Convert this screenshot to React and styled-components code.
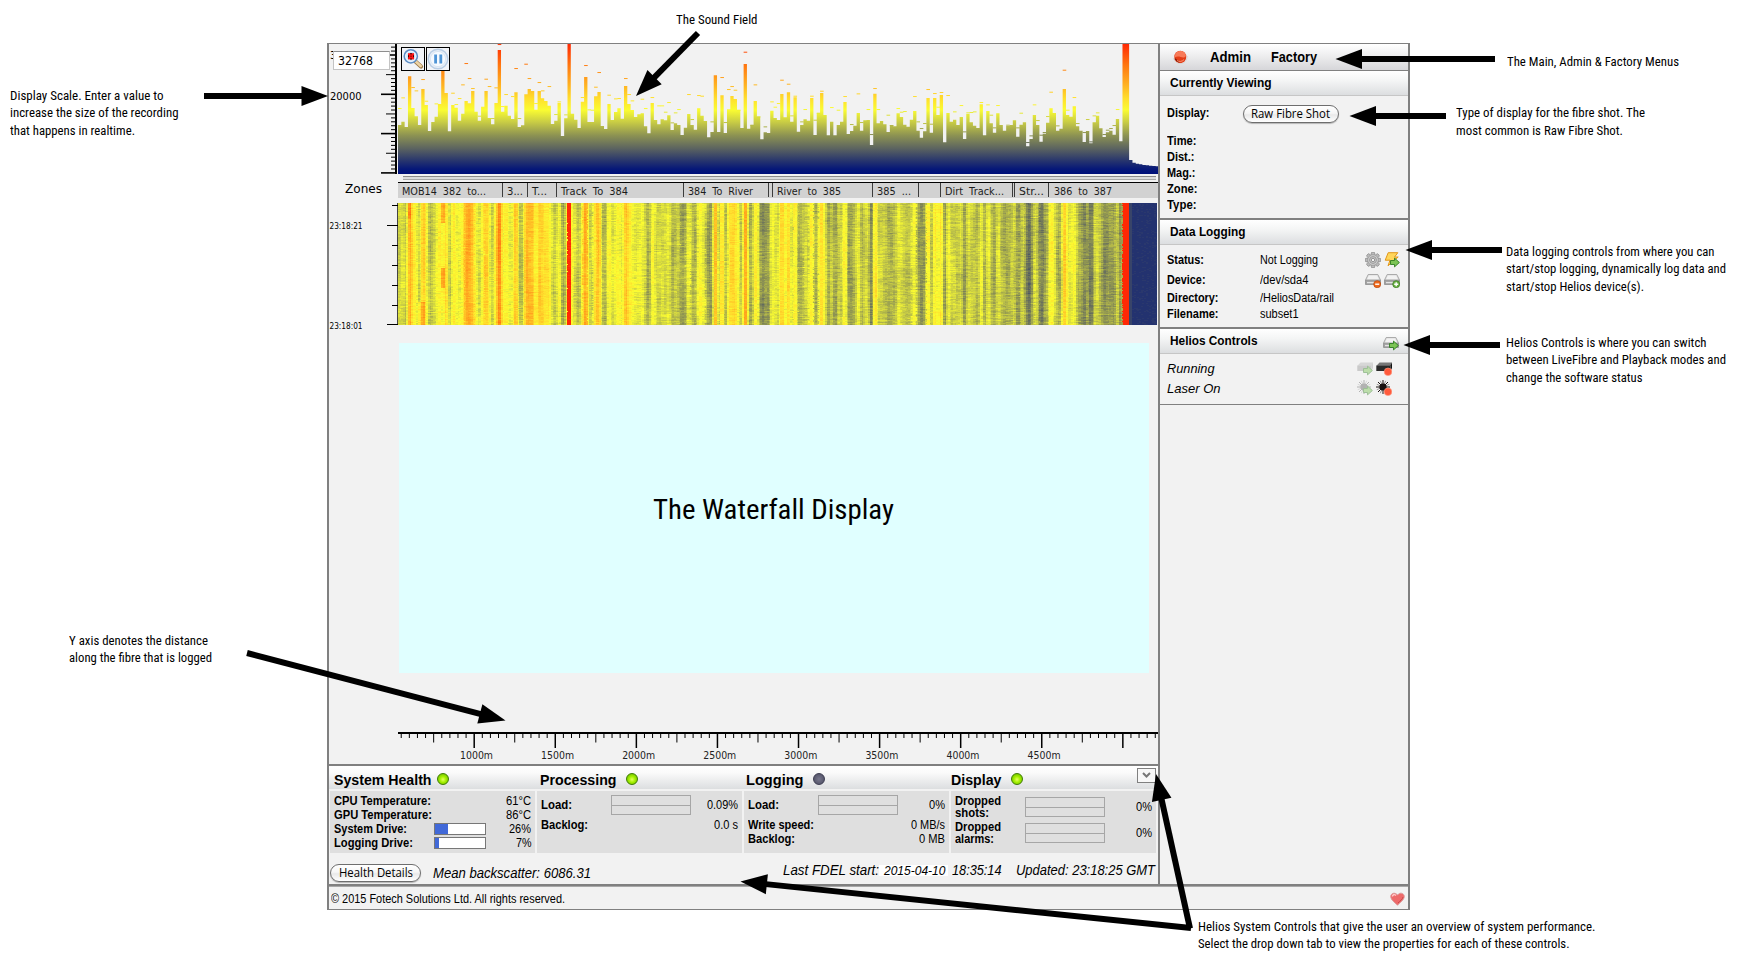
import React, { useLayoutEffect, useMemo, useRef, useState } from "react";
import styled, { createGlobalStyle, css } from "styled-components";

const Global = createGlobalStyle`
  * { box-sizing: border-box; }
  body { margin: 0; background: #fff; color: #000; font-family: "Liberation Sans", Arial, sans-serif; }
`;

const GREY = "#808080";
const PLOTTER = `"DejaVu Sans", sans-serif`;
const LUCIDA = `"Open Sans", "Noto Sans", sans-serif`;
const CONDENSED = `Roboto, "Liberation Sans", sans-serif`;

/* ---------- text set to a fixed measure ---------- */

const Measure = styled.span`
  display: inline-block;
  flex: none;
  width: ${(p) => p.$w}px;
  white-space: nowrap;
`;
const Glyphs = styled.span`
  display: inline-block;
  transform-origin: 0 50%;
`;

function Fit({ w, children }) {
  const ref = useRef(null);
  const [scale, setScale] = useState(1);
  useLayoutEffect(() => {
    const el = ref.current;
    el.style.transform = "none";
    const s = w / el.getBoundingClientRect().width;
    el.style.transform = `scaleX(${s})`;
    setScale(s);
  }, [w, children]);
  return (
    <Measure $w={w}>
      <Glyphs ref={ref} style={{ transform: `scaleX(${scale})` }}>{children}</Glyphs>
    </Measure>
  );
}

/* ---------- signal data ---------- */

const LEVELS = [
  270, 260, 276, 124, 219, 244, 270, 162, 210, 288, 261, 245, 207, 96, 174, 289, 210, 218, 257, 236,
  198, 205, 168, 230, 257, 215, 168, 249, 268, 204, 45, 230, 212, 242, 252, 172, 276, 271, 178, 162,
  168, 224, 168, 190, 198, 212, 267, 257, 204, 303, 250, 20, 236, 254, 279, 200, 126, 261, 261, 184,
  171, 273, 282, 207, 255, 231, 220, 251, 153, 207, 225, 246, 238, 235, 274, 295, 204, 255, 268, 253,
  256, 241, 285, 265, 270, 300, 278, 237, 270, 284, 220, 242, 258, 307, 291, 121, 291, 181, 294, 223,
  183, 192, 225, 279, 87, 281, 270, 198, 245, 313, 292, 294, 227, 249, 255, 177, 247, 172, 260, 187,
  290, 270, 253, 257, 189, 300, 234, 174, 240, 301, 260, 301, 270, 260, 201, 297, 288, 272, 234, 287,
  256, 255, 330, 176, 265, 258, 268, 291, 270, 274, 235, 246, 269, 275, 254, 228, 287, 308, 289, 189,
  293, 189, 240, 180, 322, 234, 260, 254, 270, 246, 312, 237, 262, 272, 279, 208, 301, 228, 265, 293,
  235, 270, 287, 273, 270, 256, 305, 269, 262, 334, 312, 240, 270, 320, 296, 263, 220, 234, 287, 281,
  162, 240, 245, 214, 274, 287, 321, 288, 325, 262, 242, 280, 306, 292, 287, 299, 252, 319, 20, 20,
  375, 383, 386, 388, 390, 391, 392, 393, 394,
];
const PEAKS = {
  0: 220, 1: 188, 3: 100, 4: 157, 5: 167, 7: 133, 8: 198, 11: 206, 16: 174, 17: 208, 18: 190, 19: 149,
  20: 85, 21: 130, 22: 160, 24: 243, 26: 132, 27: 154, 28: 250, 29: 158, 30: 28, 31: 214, 32: 178, 34: 184,
  35: 100, 36: 250, 38: 87, 39: 130, 41: 205, 42: 142, 43: 167, 45: 154, 47: 238, 48: 200, 50: 239,
  55: 187, 56: 91, 57: 224, 58: 225, 59: 156, 60: 112, 63: 180, 65: 191, 66: 190,
  68: 130, 69: 178, 70: 197, 73: 192, 74: 220, 76: 187, 78: 212, 79: 212, 80: 231, 81: 202, 82: 263, 83: 233,
  84: 223, 87: 178, 88: 253, 90: 181, 91: 183, 94: 260, 97: 127, 98: 262, 99: 163, 100: 154, 101: 165,
  102: 225, 104: 51, 106: 270, 107: 149, 108: 245, 110: 275, 112: 200, 113: 216, 114: 205, 115: 135,
  117: 147, 118: 242, 119: 183, 121: 260, 122: 223, 124: 183, 125: 255, 126: 234, 127: 168, 130: 217,
  132: 225, 134: 184, 136: 268, 138: 176, 139: 262, 141: 223, 142: 298, 143: 160, 144: 223, 147: 240,
  148: 271, 150: 220, 151: 231, 152: 229, 155: 184, 156: 260, 157: 280, 158: 265, 159: 163, 160: 267,
  161: 175, 162: 216, 163: 172, 165: 181, 167: 230, 169: 211, 170: 290, 171: 233, 172: 232, 173: 230,
  175: 202, 177: 209, 178: 240, 179: 278, 180: 211, 183: 270, 186: 278, 187: 234, 189: 322, 190: 302,
  191: 209, 192: 256, 193: 300, 194: 292, 195: 244, 196: 171, 198: 272, 200: 105, 201: 225, 203: 187,
  204: 265, 206: 292, 207: 253, 208: 320, 209: 242, 210: 233, 212: 298, 213: 285, 214: 280, 215: 271, 216: 223,
};
const STEP = 3.3233;
const STOPS = [
  [20, 255, 40, 4], [90, 255, 118, 16], [150, 255, 178, 34], [190, 255, 222, 45], [225, 250, 252, 50],
  [260, 202, 206, 68], [300, 142, 148, 82], [340, 92, 100, 96], [378, 38, 52, 110], [402, 6, 24, 120], [416, 0, 16, 122],
];

function ramp(y) {
  if (y <= STOPS[0][0]) return STOPS[0].slice(1);
  for (let i = 1; i < STOPS.length; i++) {
    if (y <= STOPS[i][0]) {
      const a = STOPS[i - 1], b = STOPS[i], t = (y - a[0]) / (b[0] - a[0]);
      return [1, 2, 3].map((k) => Math.round(a[k] + (b[k] - a[k]) * t));
    }
  }
  return STOPS[STOPS.length - 1].slice(1);
}

function buildWaterfall() {
  let seed = 9127;
  const rnd = () => ((seed = (seed * 1664525 + 1013904223) >>> 0) / 4294967296);
  const base = LEVELS.map((v, i) => {
    if (v === 20 || i > 219) return v;
    if (i === 13) return 228;
    if (i === 30) return 75;
    if (i === 20 || i === 21) return 140;
    if (i === 104) return 95;
    const p = PEAKS[i];
    return (p ? v * 0.62 + p * 0.38 : v - 12) + 8;
  });
  const phase = base.map(() => rnd() * 6.3);
  const buckets = new Map();
  const W = STEP / 2;
  for (let r = 0; r < 122; r++) {
    let streak = 0;
    for (let c = 0; c < 457; c++) {
      const i = c >> 1;
      const j = Math.min(base.length - 1, Math.max(0, i + (c % 2 ? 1 : -1)));
      let v = base[i] * 0.72 + base[j] * 0.28;
      if (base[i] < 60) v = base[i];
      else if (base[j] < 60) v = base[i] * 0.85 + 18;
      if (i >= 220) v = i === 220 ? 366 : 377 + rnd() * 3;
      else if (i < 218) {
        streak = streak * 0.65 + (rnd() - 0.5) * 22;
        v += streak + Math.sin(r / 17 + phase[i]) * 7;
        if (i === 13 && (r < 20 || (r > 64 && r < 85))) v -= 75;
        if (i === 3 && r < 16) v -= 45;
        if ((i === 6 || i === 7) && r > 98) v -= 45;
      }
      const key = Math.round(v / 5) * 5;
      if (!buckets.has(key)) buckets.set(key, []);
      buckets.get(key).push(`M${(c * W).toFixed(2)} ${r}h${(W + 0.1).toFixed(2)}v1h-${(W + 0.1).toFixed(2)}z`);
    }
  }
  return [...buckets].map(([k, d]) => ({ key: k, fill: `rgb(${ramp(k).join(",")})`, d: d.join("") }));
}

/* ---------- frame ---------- */

const Page = styled.div`
  position: relative;
  width: 1746px;
  height: 967px;
  overflow: hidden;
  padding: 43px 0 0 327px;
`;
const Frame = styled.main`
  width: 1083px;
  height: 867px;
  background: #f2f2f2;
  border: solid ${GREY};
  border-width: 1px 2px;
  display: flex;
  flex-direction: column;
`;
const Body = styled.div`
  display: flex;
  height: 840px;
`;
const Monitor = styled.section`
  width: 829px;
  display: flex;
  flex-direction: column;
`;
const Displays = styled.div`
  height: 720px;
  display: flex;
  flex-direction: column;
`;
const Strip = styled.div`
  display: flex;
  height: ${(p) => p.$h}px;
  margin-top: ${(p) => p.$gap || 0}px;
`;
const Gutter = styled.div`
  position: relative;
  width: 69px;
  flex: none;
`;
const Drawing = styled.svg`
  display: block;
  flex: none;
`;
const ScaleField = styled.div`
  position: absolute;
  left: 4px;
  top: 7px;
  width: 57px;
  height: 19px;
  background: #fff;
  border: 1px solid #c4c4c4;
  border-top-color: #8e8e8e;
  font: 12px/18px ${PLOTTER};
  padding-left: 4px;
`;
const Plot = styled.div`
  position: relative;
  width: 760px;
`;
const PlotTools = styled.div`
  position: absolute;
  left: 3px;
  top: 3px;
  display: flex;
  gap: 1px;
`;
const ToolButton = styled.div`
  width: 24px;
  height: 24px;
  border: 1px solid #000;
  background: #f2f4f8;
`;
const SliderTrack = styled.div`
  width: 753px;
  height: 4px;
  margin: 2px 0 0 5px;
  background: #dcdcdc;
  border-top: 1px solid #8c8c8c;
  border-bottom: 1px solid #a8a8a8;
`;
const ZonesLabel = styled.div`
  padding-left: 16px;
  font: 11.5px/14px ${PLOTTER};
`;
const ZoneBar = styled.div`
  display: flex;
  width: 760px;
  background: #d2d2d2;
  border-top: 1px solid #000;
`;
const ZoneCell = styled.div`
  width: ${(p) => p.$w}px;
  height: 14px;
  flex: none;
  overflow: hidden;
  border-right: 1px solid #3c3c3c;
  padding-left: ${(p) => (p.$blank ? 0 : 4)}px;
  font: 10px/17px ${PLOTTER};
  word-spacing: 3px;
  color: #1c1c1c;
  &:last-child { border-right: 0; padding-left: 5px; }
`;
const WaterfallNote = styled.div`
  width: 750px;
  height: 330px;
  margin: 18px 0 0 70px;
  padding: 3px 2px 0 0;
  background: #e0ffff;
  display: flex;
  align-items: center;
  justify-content: center;
  font: 28px/34px ${CONDENSED};
  font-stretch: condensed;
`;

/* ---------- system panel ---------- */

const SystemPanel = styled.section`
  height: 120px;
  border-top: 2px solid ${GREY};
`;
const PanelHeads = styled.div`
  position: relative;
  display: flex;
  gap: 2px;
  height: 23px;
  padding-left: 1px;
  background: linear-gradient(#fff, #fafafa 30%, #dcdee0);
`;
const PanelHead = styled.div`
  width: 205px;
  display: flex;
  align-items: center;
  padding: 5px 0 0 ${(p) => p.$pad}px;
  gap: ${(p) => p.$gap}px;
  font: bold 14.5px/18px "Liberation Sans", sans-serif;
`;
const Led = styled.span`
  width: 12px;
  height: 12px;
  margin-top: -3px;
  border-radius: 50%;
  border: 1px solid ${(p) => (p.$on ? "#3f7d00" : "#3c3c50")};
  background: ${(p) => p.$on
    ? "radial-gradient(circle at 50% 55%, #e4ff60 0, #a4f000 40%, #5cae00 100%)"
    : "radial-gradient(circle at 50% 50%, #77778c, #4a4a60)"};
`;
const Collapse = styled.button`
  position: absolute;
  right: 2px;
  top: 2px;
  width: 19px;
  height: 15px;
  padding: 0;
  border: 1px solid ${GREY};
  background: #f8f8f8;
  display: grid;
  place-items: center;
`;
const PanelCards = styled.div`
  display: flex;
  gap: 2px;
  padding: 2px 0 0 1px;
`;
const Card = styled.div`
  width: 205px;
  height: 62px;
  background: #dfdfdf;
  padding: ${(p) => p.$pad};
  font-size: 12px;
`;
const Stat = styled.div`
  display: flex;
  align-items: center;
  height: ${(p) => p.$h || 14}px;
  line-height: ${(p) => p.$lh || 14}px;
  margin-bottom: ${(p) => p.$mb || 0}px;
`;
const StatName = styled.div`
  width: ${(p) => p.$w}px;
  font-weight: bold;
`;
const StatValue = styled.div`
  margin-left: auto;
  height: ${(p) => p.$lh || 14}px;
`;
const DriveBar = styled.div`
  width: 52px;
  height: 12px;
  background: #fff;
  border: 1px solid #777;
`;
const DriveFill = styled.div`
  height: 100%;
  background: #4169d8;
`;
const Gauge = styled.div`
  width: 80px;
  height: 20px;
  border: 1px solid #a6a6a6;
  background: linear-gradient(#a6a6a6, #a6a6a6) 0 9px / 100% 1px no-repeat;
`;
const StatusLine = styled.div`
  display: flex;
  height: 31px;
  padding: 0 3px 0 1px;
  font: italic 14px/18px "Liberation Sans", sans-serif;
`;
const Pill = styled.button`
  display: flex;
  justify-content: center;
  align-items: center;
  width: ${(p) => p.$w}px;
  height: 18px;
  padding: 0;
  border: 1px solid #6e6e6e;
  border-radius: 9px;
  box-shadow: 0 1px 1px rgba(0, 0, 0, 0.25);
  background: linear-gradient(#fff, #f6f6f6 45%, #e9e9e9 55%, #fff);
  font: 12px/16px ${LUCIDA};
  color: #000;
`;
const Backscatter = styled.div`
  margin: 11px auto 0 12px;
`;
const Clock = styled.div`
  display: flex;
  margin-top: 8px;
`;
const DatePatch = styled.span`
  width: 69px;
  height: 11px;
  margin: 4px 4px 0 0;
  padding-left: 5px;
  background: #fff;
  font-size: 12.5px;
  line-height: 13px;
`;
const Updated = styled.span`
  margin-left: 15px;
`;
const PushDown = styled.div`
  margin-top: 11px;
`;

/* ---------- sidebar ---------- */

const Sidebar = styled.aside`
  width: 250px;
  border-left: 2px solid ${GREY};
`;
const MenuBar = styled.nav`
  display: flex;
  align-items: center;
  height: 27px;
  padding: 0 0 1px 13px;
  border-bottom: 1px solid ${GREY};
  background: linear-gradient(#fff, #f0f0f1 40%, #d6d6d9);
  font: bold 14px/18px "Liberation Sans", sans-serif;
`;
const MenuItem = styled.span`
  margin-left: ${(p) => p.$ml}px;
`;
const SectionHead = styled.header`
  display: flex;
  justify-content: space-between;
  height: 25px;
  padding: 0 9px 0 10px;
  border-bottom: 1px solid #c6c6c6;
  background: linear-gradient(#fff, #f4f5f5 40%, #dcdee0);
  font: bold 12.5px/25px "Liberation Sans", sans-serif;
`;
const SectionBody = styled.div`
  height: ${(p) => p.$h}px;
  padding: ${(p) => p.$pt}px 8px 0 7px;
  border-bottom: ${(p) => p.$line}px solid ${GREY};
  font-size: 12px;
`;
const Field = styled.div`
  display: flex;
  height: ${(p) => p.$h}px;
  line-height: 17px;
`;
const FieldName = styled.div`
  width: ${(p) => p.$w || 93}px;
  font-weight: bold;
`;
const IconPair = styled.div`
  display: flex;
  gap: 3px;
  margin-left: auto;
  ${(p) => p.$inset && css`margin: 1px 8px 0 auto;`}
`;
const StateRow = styled.div`
  display: flex;
  height: 20px;
  font: italic 13.5px/20px "Liberation Sans", sans-serif;
`;
const Footer = styled.footer`
  display: flex;
  justify-content: space-between;
  height: 25px;
  padding: 0 3px 0 2px;
  border-top: 2px solid ${GREY};
  box-shadow: inset 0 1px 0 #a8a8a8;
  font-size: 12px;
  line-height: 27px;
`;
const IconSlot = styled.span`
  height: 14px;
  margin-top: ${(p) => p.$mt}px;
  line-height: 0;
`;

/* ---------- callouts ---------- */

const Arrows = styled.svg`
  position: absolute;
  left: 0;
  top: 0;
  pointer-events: none;
`;
const Note = styled.div`
  position: absolute;
  left: ${(p) => p.$x}px;
  top: ${(p) => p.$y}px;
  display: flex;
  flex-direction: column;
  font: 13px/17.6px ${CONDENSED};
  font-stretch: condensed;
`;

const NOTES = [
  { x: 10, base: 100, lines: [["Display Scale. Enter a value to", 153.5], ["increase the size of the recording", 168.5], ["that happens in realtime.", 125]] },
  { x: 676, base: 24, lines: [["The Sound Field", 81.5]] },
  { x: 1506.5, base: 66, lines: [["The Main, Admin & Factory Menus", 172]] },
  { x: 1456, base: 117.4, lines: [["Type of display for the fibre shot. The", 189], ["most common is Raw Fibre Shot.", 167]] },
  { x: 1506, base: 256, lines: [["Data logging controls from where you can", 208.5], ["start/stop logging, dynamically log data and", 220], ["start/stop Helios device(s).", 138]] },
  { x: 1506, base: 347, lines: [["Helios Controls is where you can switch", 200.5], ["between LiveFibre and Playback modes and", 220], ["change the software status", 136.5]] },
  { x: 69, base: 645, lines: [["Y axis denotes the distance", 139], ["along the fibre that is logged", 143]] },
  { x: 1198, base: 931, lines: [["Helios System Controls that give the user an overview of system performance.", 397.5], ["Select the drop down tab to view the properties for each of these controls.", 371.5]] },
];

const ARROWS = [
  [204, 96, 328, 96], [698, 33, 636, 96], [1495, 59, 1335.5, 59], [1446, 116, 1349.5, 116],
  [1502, 250, 1405.5, 250], [1500, 345, 1403.5, 345], [247, 653, 505.5, 720.5],
  [1190, 928.5, 1156, 774], [1191, 928, 740.5, 881.5],
];

function Arrow({ from: [x1, y1, x2, y2] }) {
  const len = Math.hypot(x2 - x1, y2 - y1);
  const ux = (x2 - x1) / len, uy = (y2 - y1) / len;
  const bx = x2 - ux * 26.5, by = y2 - uy * 26.5;
  return (
    <g>
      <line x1={x1} y1={y1} x2={bx + ux} y2={by + uy} stroke="#000" strokeWidth="6" />
      <polygon points={`${x2},${y2} ${bx - uy * 10},${by + ux * 10} ${bx + uy * 10},${by - ux * 10}`} />
    </g>
  );
}

/* ---------- icons ---------- */

const GreenArrow = ({ x = 6, y = 6 }) => (
  <path transform={`translate(${x} ${y})`} d="M.5 3h4V.6L9.4 5 4.5 9.4V7h-4z" fill="#7cc455" stroke="#2f7d22" strokeWidth=".9" />
);
const Drive = () => (
  <g>
    <path d="M3.2 2.500h9.600l2.700 5.500v4.500H.5V8z" fill="#dcdcdc" stroke="#9a9a9a" strokeWidth=".8" />
    <path d="M3.800 3.400h8.400l1.800 4H2z" fill="#f2f2f2" />
    <path d="M.8 8h14.400v4.300H.8z" fill="#a8a8a8" stroke="#8a8a8a" strokeWidth=".6" />
    <path d="M2 10.600h8.500" stroke="#e4e4e4" strokeWidth="1.200" />
  </g>
);
const Icon = ({ children, fade = 1 }) => (
  <Drawing width="16" height="16" viewBox="0 0 16 16" opacity={fade}>{children}</Drawing>
);
const Gear = () => (
  <Icon>
    {[0, 45, 90, 135, 180, 225, 270, 315].map((a) => (
      <rect key={a} x="6.3" y=".3" width="3.400" height="4" rx=".8" fill="#bcbcbc" stroke="#8a8a8a" strokeWidth=".8" transform={`rotate(${a} 8 8)`} />
    ))}
    <circle cx="8" cy="8" r="5.400" fill="#cdcdcd" stroke="#929292" strokeWidth=".7" />
    <circle cx="8" cy="8" r="3.400" fill="none" stroke="#999" strokeWidth="1" />
    <circle cx="8" cy="8" r="1.700" fill="#f2f2f2" stroke="#808080" strokeWidth=".8" />
  </Icon>
);
const Bolt = () => (
  <Icon>
    <path d="M4.200.7h9.600L10.600 5h3.600L4 13.800l2-5.600H1.200z" fill="#ffd65a" stroke="#e0961a" strokeWidth="1" />
    <GreenArrow x={6} y={5.500} />
  </Icon>
);
const DriveBadge = ({ plus }) => (
  <Icon>
    <Drive />
    <circle cx="12.200" cy="12.200" r="3.500" fill={plus ? "#6cb244" : "#ee6a1c"} stroke={plus ? "#37761f" : "#b8440a"} strokeWidth=".7" />
    <path d={plus ? "M10.200 12.200h4M12.200 10.200v4" : "M10.200 12.200h4"} stroke="#fff" strokeWidth="1.400" />
  </Icon>
);
const DriveGo = () => <Icon><Drive /><GreenArrow x={6} y={5.500} /></Icon>;
const Box = ({ pale }) => (
  <g>
    <path d="M3.500 2.500H16l-1 3.200H.5z" fill={pale ? "#b8b8b8" : "#777"} />
    <path d="M.3 5.500h14.200V11H.3z" fill={pale ? "#9a9a9a" : "#2a2a2a"} />
    <path d="M14.500 5.500L16 2.600V8l-1.500 3z" fill={pale ? "#aaa" : "#111"} />
  </g>
);
const Burst = ({ fill }) => (
  <g fill={fill} stroke={fill}>
    <circle cx="7" cy="7" r="3.600" stroke="none" />
    <path d="M7 0v14M0 7h14M2 2l10 10M12 2L2 12" strokeWidth="1" />
    <path d="M4.300.8l5.400 12.400M.8 9.700l12.400-5.400M.8 4.300l12.400 5.400M9.700.8L4.300 13.200" strokeWidth=".4" />
  </g>
);
const RedDot = () => <circle cx="12" cy="11.800" r="3.800" fill="#ff5a3c" stroke="#ff9a80" strokeWidth=".6" />;
const Globe = () => (
  <Drawing width="15" height="14" viewBox="0 0 15 14">
    <ellipse cx="7.300" cy="7" rx="6" ry="6.200" fill="#e33d17" />
    <path d="M1.800 7.200C1.600 3 4.600 1 7.600 1c3 0 5.300 2.200 5.300 5-1.700 2.200-3.400 1.400-5.200 1-2-.5-3.600-.6-5.900.2z" fill="#f87a58" />
    <path d="M.4 8.200c1 3 3.200 5.200 6.800 5.400 4.200 0 7-3.400 7.100-7.600" fill="none" stroke="#d9d4d2" strokeWidth="1" />
    <path d="M1.800 8.600c1.200 1.200 2.200 2.600 4.600 3.600" fill="none" stroke="#8c1703" strokeWidth="1.300" />
    <path d="M4 10.500c2 1.500 5 1.200 7-.9" fill="none" stroke="#ffab8c" strokeWidth=".8" />
  </Drawing>
);
const Heart = () => (
  <Drawing width="15" height="14" viewBox="0 0 15 14">
    <path d="M7.500 13.300C5 10.500.9 8.300.7 4.400.6 1.600 4.800-.4 7.500 3 10-.4 14.400 1.400 14.300 4.400c-.1 3.600-4.300 5.900-6.800 8.900z" fill="#ee6a6a" stroke="#d79a9a" strokeWidth=".9" />
    <path d="M2.400 4.600c0-1.800 2-2.700 3.600-1.200" fill="none" stroke="#ffc9c9" strokeWidth="1.400" />
    <path d="M8 11c2-2.200 4.700-3.500 5-6" fill="none" stroke="#c94b4b" strokeWidth="1" />
  </Drawing>
);
const Magnifier = () => (
  <Drawing width="22" height="22" viewBox="0 0 22 22">
    <path d="M13.500 13.500l5.500 5" stroke="#9c7a4a" strokeWidth="4.200" strokeLinecap="round" />
    <path d="M13.500 13.200l5.200 4.800" stroke="#ecd2a4" strokeWidth="2.600" strokeLinecap="round" />
    <circle cx="8.800" cy="8.300" r="6.600" fill="#cfe2f6" stroke="#5d8dc4" strokeWidth="1.500" />
    <circle cx="8.800" cy="8.300" r="5" fill="none" stroke="#f2f8ff" strokeWidth=".9" />
    <path d="M6 5.200h6v6.200H6z" fill="#ff1414" />
    <path d="M8 5.200h2v1H8zM8 10.400h2v1H8zM6 7.300h1v2H6zM11 7.300h1v2h-1zM8.500 7.800h1v1h-1z" fill="#400" />
  </Drawing>
);
const Pause = () => (
  <Drawing width="22" height="22" viewBox="0 0 22 22">
    <circle cx="11" cy="11" r="9.800" fill="#e6eef7" stroke="#b9cde4" strokeWidth="1.400" />
    <circle cx="11" cy="11" r="7.600" fill="#f6faff" stroke="#d5e2f0" strokeWidth=".8" />
    <path d="M7.200 6.500h2.800v9H7.200zM12.400 6.500h2.800v9h-2.800z" fill="#4f95d6" />
  </Drawing>
);

/* ---------- charts ---------- */

function ScaleAxis() {
  const ticks = [];
  for (let k = 0; k <= 32; k++) {
    const y = 128.9 - k * 3.93;
    ticks.push([y, k % 10 === 0 ? 52 : k % 5 === 0 ? 57 : 62, k % 10 === 0 ? 1.6 : 1]);
  }
  return (
    <Drawing width="69" height="130" fontFamily="DejaVu Sans" fontSize="10">
      <text x="1" y="15">3</text>
      <text x="1" y="55.500" textLength="31.500" lengthAdjust="spacingAndGlyphs">20000</text>
      {ticks.map(([y, x, w]) => <path key={y} d={`M${x} ${y}H67`} stroke="#000" strokeWidth={w} />)}
      <rect x="66" y="0" width="2" height="130" />
    </Drawing>
  );
}

function SoundField() {
  const toY = (v) => (v - 27) / 3;
  return (
    <Drawing width="760" height="130">
      <defs>
        <linearGradient id="level" gradientUnits="userSpaceOnUse" x1="0" x2="0" y1="0" y2="130">
          {STOPS.map(([y, r, g, b]) => <stop key={y} offset={Math.max(0, (y - 27) / 390)} stopColor={`rgb(${r},${g},${b})`} />)}
        </linearGradient>
      </defs>
      <path
        fill="url(#level)"
        d={"M0 130" + LEVELS.map((v, i) => `L${(i * STEP).toFixed(2)} ${toY(v).toFixed(1)}h${STEP}`).join("") + "V130z"}
      />
      {Object.entries(PEAKS).map(([i, v]) => (
        <rect key={i} x={i * STEP} y={toY(v) - 0.3} width="3.6" height="1" fill={`rgb(${ramp(v + 6).join(",")})`} />
      ))}
    </Drawing>
  );
}

function TimeAxis() {
  return (
    <Drawing width="69" height="128" fontFamily="DejaVu Sans" fontSize="8">
      <rect x="68" y="0" width="1" height="122" fill="#444" />
      {[2.5, 42.5, 62.5, 82.5, 102.5].map((y) => <path key={y} d={`M63 ${y}H69`} stroke="#000" />)}
      <path d="M58 22.500H69M58 121.500H69" stroke="#000" />
      <text x="0.500" y="26" textLength="33" lengthAdjust="spacingAndGlyphs">23:18:21</text>
      <text x="0.500" y="126" textLength="33" lengthAdjust="spacingAndGlyphs">23:18:01</text>
    </Drawing>
  );
}

function Waterfall() {
  const layers = useMemo(buildWaterfall, []);
  return (
    <Drawing width="760" height="122" shapeRendering="crispEdges">
      {layers.map((l) => <path key={l.key} d={l.d} fill={l.fill} />)}
    </Drawing>
  );
}

function DistanceAxis() {
  const ticks = [];
  for (let k = -9; k <= 84; k++) {
    const x = 76.2 + k * 8.108;
    if (x > 760) break;
    ticks.push([x, k % 10 === 0 ? 16 : k % 5 === 0 ? 10.5 : 6, k % 10 === 0 ? 1.5 : 1]);
  }
  return (
    <Drawing width="760" height="32" fontFamily="DejaVu Sans" fontSize="10" fill="#222">
      <rect x="0" y="0" width="760" height="2" fill="#000" />
      {ticks.map(([x, h, w]) => <path key={x} d={`M${x} 1V${h}`} stroke="#000" strokeWidth={w} />)}
      {[1000, 1500, 2000, 2500, 3000, 3500, 4000, 4500].map((m, i) => (
        <text key={m} x={62 + i * 81.08} y="26.500" textLength="33" lengthAdjust="spacingAndGlyphs">{m}m</text>
      ))}
    </Drawing>
  );
}

const ZONES = [
  [105, "MOB14 382 to...", 84], [25, "3...", 16], [29, "T...", 15], [127, "Track To 384", 67], [85, "384 To River", 65],
  [4, "", 0], [100, "River to 385", 64], [46, "385 ...", 34], [22, "", 0], [72, "Dirt Track...", 59], [2, "", 0],
  [34, "Str...", 25], [109, "386 to 387", 58],
];

const Value = ({ w, lh, children }) => <StatValue $lh={lh}><Fit w={w}>{children}</Fit></StatValue>;

export default function App() {
  return (
    <Page>
      <Global />
      <Frame>
        <Body>
          <Monitor>
            <Displays>
              <Strip $h={130}>
                <Gutter>
                  <ScaleAxis />
                  <ScaleField><Fit w={35}>32768</Fit></ScaleField>
                </Gutter>
                <Plot>
                  <SoundField />
                  <PlotTools>
                    <ToolButton><Magnifier /></ToolButton>
                    <ToolButton><Pause /></ToolButton>
                  </PlotTools>
                </Plot>
              </Strip>
              <Strip $h={8}>
                <Gutter />
                <SliderTrack />
              </Strip>
              <Strip $h={16}>
                <Gutter><ZonesLabel><Fit w={37}>Zones</Fit></ZonesLabel></Gutter>
                <ZoneBar>
                  {ZONES.map(([w, name, tw], i) => (
                    <ZoneCell key={i} $w={w} $blank={!name}>{name && <Fit w={tw}>{name}</Fit>}</ZoneCell>
                  ))}
                </ZoneBar>
              </Strip>
              <Strip $h={122} $gap={5}>
                <Gutter><TimeAxis /></Gutter>
                <Waterfall />
              </Strip>
              <WaterfallNote><Fit w={241}>The Waterfall Display</Fit></WaterfallNote>
              <Strip $h={32} $gap={59}>
                <Gutter />
                <DistanceAxis />
              </Strip>
            </Displays>

            <SystemPanel>
              <PanelHeads>
                <PanelHead $pad={4} $gap={5.5}><Fit w={97.5}>System Health</Fit><Led $on /></PanelHead>
                <PanelHead $pad={3} $gap={9.5}><Fit w={76.5}>Processing</Fit><Led $on /></PanelHead>
                <PanelHead $pad={2} $gap={9.5}><Fit w={57.5}>Logging</Fit><Led /></PanelHead>
                <PanelHead $pad={0} $gap={9.5}><Fit w={50.5}>Display</Fit><Led $on /></PanelHead>
                <Collapse>
                  <Drawing width="9" height="7" viewBox="0 0 9 7"><path d="M1 1l3.500 3.500L8 1" fill="none" stroke="#777" strokeWidth="2" /></Drawing>
                </Collapse>
              </PanelHeads>
              <PanelCards>
                <Card $pad="3px 4px 0 4px">
                  <Stat><StatName $w={100}><Fit w={97}>CPU Temperature:</Fit></StatName><Value w={25}>61°C</Value></Stat>
                  <Stat><StatName $w={100}><Fit w={98}>GPU Temperature:</Fit></StatName><Value w={25}>86°C</Value></Stat>
                  <Stat><StatName $w={100}><Fit w={73}>System Drive:</Fit></StatName><DriveBar><DriveFill style={{ width: "26%" }} /></DriveBar><Value w={22}>26%</Value></Stat>
                  <Stat><StatName $w={100}><Fit w={79}>Logging Drive:</Fit></StatName><DriveBar><DriveFill style={{ width: "7%" }} /></DriveBar><Value w={15.5}>7%</Value></Stat>
                </Card>
                <Card $pad="4px 4px 0 4px">
                  <Stat $h={20} $lh={22} $mb={3}><StatName $w={70}><Fit w={31}>Load:</Fit></StatName><Gauge /><Value lh={22} w={31}>0.09%</Value></Stat>
                  <Stat><StatName $w={70}><Fit w={47}>Backlog:</Fit></StatName><Value w={24}>0.0 s</Value></Stat>
                </Card>
                <Card $pad="4px 4px 0 4px">
                  <Stat $h={20} $lh={22} $mb={3}><StatName $w={70}><Fit w={31}>Load:</Fit></StatName><Gauge /><Value lh={22} w={16}>0%</Value></Stat>
                  <Stat><StatName $w={70}><Fit w={66}>Write speed:</Fit></StatName><Value w={34}>0 MB/s</Value></Stat>
                  <Stat><StatName $w={70}><Fit w={47}>Backlog:</Fit></StatName><Value w={26}>0 MB</Value></Stat>
                </Card>
                <Card $pad="3px 4px 0 4px">
                  <Stat $h={26} $lh={12}><StatName $w={70}><Fit w={46}>Dropped</Fit><Fit w={34}>shots:</Fit></StatName><Gauge /><Value lh={12} w={16}>0%</Value></Stat>
                  <Stat $h={26} $lh={12}><StatName $w={70}><Fit w={46}>Dropped</Fit><Fit w={39}>alarms:</Fit></StatName><Gauge /><Value lh={12} w={16}>0%</Value></Stat>
                </Card>
              </PanelCards>
              <StatusLine>
                <PushDown><Pill $w={91}><Fit w={74}>Health Details</Fit></Pill></PushDown>
                <Backscatter><Fit w={158}>Mean backscatter: 6086.31</Fit></Backscatter>
                <Clock>
                  <Fit w={96}>Last FDEL start:</Fit>
                  <DatePatch><Fit w={61.5}>2015-04-10</Fit></DatePatch>
                  <Fit w={49.5}>18:35:14</Fit>
                  <Updated><Fit w={139}>Updated: 23:18:25 GMT</Fit></Updated>
                </Clock>
              </StatusLine>
            </SystemPanel>
          </Monitor>

          <Sidebar>
            <MenuBar>
              <Globe />
              <MenuItem $ml={22}><Fit w={41}>Admin</Fit></MenuItem>
              <MenuItem $ml={20}><Fit w={46}>Factory</Fit></MenuItem>
            </MenuBar>
            <SectionHead><Fit w={101.5}>Currently Viewing</Fit></SectionHead>
            <SectionBody $h={124} $pt={9} $line={2}>
              <Field $h={28}>
                <FieldName $w={75.5}><Fit w={42.5}>Display:</Fit></FieldName>
                <Pill $w={96}><Fit w={79}>Raw Fibre Shot</Fit></Pill>
              </Field>
              {[["Time:", 29.5], ["Dist.:", 27.5], ["Mag.:", 28.5], ["Zone:", 30.5], ["Type:", 29.5]].map(([t, w]) => (
                <Field key={t} $h={16}><FieldName><Fit w={w}>{t}</Fit></FieldName></Field>
              ))}
            </SectionBody>
            <SectionHead><Fit w={75.5}>Data Logging</Fit></SectionHead>
            <SectionBody $h={84} $pt={7} $line={2}>
              <Field $h={20}><FieldName><Fit w={37}>Status:</Fit></FieldName><Fit w={58}>Not Logging</Fit><IconPair><Gear /><Bolt /></IconPair></Field>
              <Field $h={18}><FieldName><Fit w={38.5}>Device:</Fit></FieldName><Fit w={48.5}>/dev/sda4</Fit><IconPair><DriveBadge /><DriveBadge plus /></IconPair></Field>
              <Field $h={16}><FieldName><Fit w={51.5}>Directory:</Fit></FieldName><Fit w={74}>/HeliosData/rail</Fit></Field>
              <Field $h={16}><FieldName><Fit w={51.5}>Filename:</Fit></FieldName><Fit w={38.5}>subset1</Fit></Field>
            </SectionBody>
            <SectionHead><Fit w={87.5}>Helios Controls</Fit><IconSlot $mt={6}><DriveGo /></IconSlot></SectionHead>
            <SectionBody $h={51} $pt={5} $line={1}>
              <StateRow>
                <Fit w={47.5}>Running</Fit>
                <IconPair $inset>
                  <Icon fade={0.45}><Box pale /><GreenArrow y={5.5} /></Icon>
                  <Icon><Box /><RedDot /></Icon>
                </IconPair>
              </StateRow>
              <StateRow>
                <Fit w={53.5}>Laser On</Fit>
                <IconPair $inset>
                  <Icon fade={0.45}><Burst fill="#666" /><GreenArrow y={5.5} /></Icon>
                  <Icon><Burst fill="#1a1210" /><RedDot /></Icon>
                </IconPair>
              </StateRow>
            </SectionBody>
          </Sidebar>
        </Body>
        <Footer>
          <Fit w={234}>© 2015 Fotech Solutions Ltd. All rights reserved.</Fit>
          <IconSlot $mt={6}><Heart /></IconSlot>
        </Footer>
      </Frame>

      <Arrows width="1746" height="967">
        {ARROWS.map((a) => <Arrow key={a.join()} from={a} />)}
      </Arrows>
      {NOTES.map((n) => (
        <Note key={n.lines[0][0]} $x={n.x} $y={n.base - 13.25}>
          {n.lines.map(([t, w]) => <Fit key={t} w={w}>{t}</Fit>)}
        </Note>
      ))}
    </Page>
  );
}
